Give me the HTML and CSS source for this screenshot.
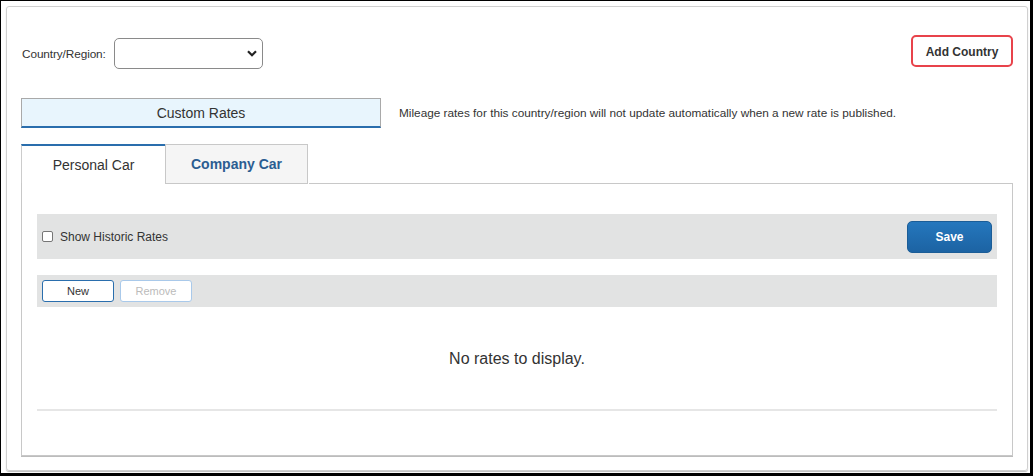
FILE: index.html
```html
<!DOCTYPE html>
<html>
<head>
<meta charset="utf-8">
<link rel="stylesheet" href="styles.css">
</head>
<body>
<div class="frame">
  <div class="card">
    <div class="top-row">
      <div class="country">
        <label class="country-label">Country/Region:</label>
        <div class="select">
          <svg class="chev" width="10" height="7" viewBox="0 0 10 7"><path d="M1 1.2 L5 5.2 L9 1.2" fill="none" stroke="#222" stroke-width="2.2"/></svg>
        </div>
      </div>
      <button class="add-btn">Add Country</button>
    </div>
    <div class="rates-row">
      <div class="custom-rates">Custom Rates</div>
      <div class="rates-note">Mileage rates for this country/region will not update automatically when a new rate is published.</div>
    </div>
    <div class="tabs">
      <div class="tab tab-active">Personal Car</div>
      <div class="tab tab-other">Company Car</div>
    </div>
    <div class="panel">
      <div class="bar bar-top">
        <label class="hist"><span class="checkbox"></span>Show Historic Rates</label>
        <button class="save-btn">Save</button>
      </div>
      <div class="bar bar-actions">
        <button class="small-btn">New</button>
        <button class="small-btn disabled">Remove</button>
      </div>
      <div class="empty">No rates to display.</div>
      <div class="rule"></div>
    </div>
  </div>
</div>
</body>
</html>
```

FILE: styles.css
```css
* { box-sizing: border-box; }
html, body { margin: 0; padding: 0; background: #fff; }
body { font-family: Arial, "Liberation Sans", sans-serif; color: #333; }
.frame {
  width: 1033px;
  height: 476px;
  border-left: 1px solid #000;
  border-top: 1px solid #000;
  border-right: 3px solid #000;
  border-bottom: 3px solid #000;
  padding: 5px 2px 2px 5px;
}
.card {
  height: 465px;
  border: 1px solid #d0d0d0;
  border-radius: 3px;
  box-shadow: 0 1px 1px #bdbdbd;
  padding: 28px 14px 14px 14px;
  display: flex;
  flex-direction: column;
}
.top-row {
  display: flex;
  justify-content: space-between;
  align-items: flex-start;
  height: 32px;
}
.country { display: flex; align-items: center; padding-left: 1px; margin-top: 3px; }
.country-label { font-size: 11.8px; color: #333; margin-right: 8px; letter-spacing: -0.1px; }
.select {
  width: 149px;
  height: 31px;
  border: 1px solid #8a8a8a;
  border-radius: 5px;
  background: #fff;
  display: flex;
  align-items: center;
  justify-content: flex-end;
  padding-right: 5px;
}
.add-btn {
  font-family: Arial, "Liberation Sans", sans-serif;
  font-weight: bold;
  font-size: 12px;
  color: #333;
  background: #fff;
  border: 2px solid #e8434b;
  border-radius: 5px;
  width: 102px;
  height: 32px;
  padding: 1px 0 0 0;
}
.rates-row {
  display: flex;
  align-items: center;
  margin-top: 31px;
}
.custom-rates {
  width: 360px;
  height: 30px;
  background: #e8f5fd;
  border: 1px solid #a9a9a9;
  border-bottom: 2px solid #2a6ead;
  font-size: 14px;
  color: #333;
  display: flex;
  align-items: center;
  justify-content: center;
}
.rates-note { font-size: 11.8px; color: #333; margin-left: 18px; }
.tabs {
  display: flex;
  margin-top: 16px;
  height: 40px;
}
.tab {
  width: 144px;
  height: 40px;
  display: flex;
  align-items: center;
  justify-content: center;
  font-size: 14px;
}
.tab-active {
  border-top: 2px solid #2a6ead;
  border-left: 1px solid #ccc;
  background: #fff;
  color: #333;
}
.tab-other {
  border: 1px solid #c8c8c8;
  background: #f5f5f5;
  color: #2b5d91;
  font-weight: bold;
  width: 143px;
}
.panel {
  flex: 1;
  border: 1px solid #c8c8c8;
  border-top: none;
  margin-top: -1px;
  position: relative;
  padding: 31px 15px 0 15px;
  box-shadow: 0 1px 0 #bcbcbc;
}
.panel::before {
  content: "";
  position: absolute;
  top: 0;
  left: 287px;
  right: -1px;
  border-top: 1px solid #c8c8c8;
}
.bar { background: #e2e3e3; display: flex; align-items: center; }
.bar-top {
  height: 45px;
  justify-content: space-between;
  padding: 0 5px 0 5px;
}
.hist { display: flex; align-items: center; font-size: 12px; color: #333; }
.checkbox {
  width: 11px;
  height: 11px;
  border: 1px solid #767676;
  border-radius: 2px;
  background: #fff;
  margin-right: 7px;
}
.save-btn {
  font-family: Arial, "Liberation Sans", sans-serif;
  width: 85px;
  height: 32px;
  border: 1px solid #1b5d97;
  border-radius: 5px;
  background: linear-gradient(#2577bd, #1c63a3);
  color: #fff;
  font-weight: bold;
  font-size: 12px;
  padding: 0;
}
.bar-actions {
  height: 32px;
  margin-top: 16px;
  padding-left: 5px;
  gap: 6px;
}
.small-btn {
  font-family: Arial, "Liberation Sans", sans-serif;
  width: 72px;
  height: 22px;
  border: 1px solid #2a6ead;
  border-radius: 3px;
  background: #fff;
  color: #333;
  font-size: 11px;
  padding: 0;
}
.small-btn.disabled { border-color: #a9c9ea; color: #bbb; }
.empty {
  text-align: center;
  font-size: 16px;
  color: #333;
  margin-top: 43px;
  height: 18px;
  line-height: 18px;
}
.rule { border-top: 2px solid #e6e6e6; margin-top: 41px; }
```
